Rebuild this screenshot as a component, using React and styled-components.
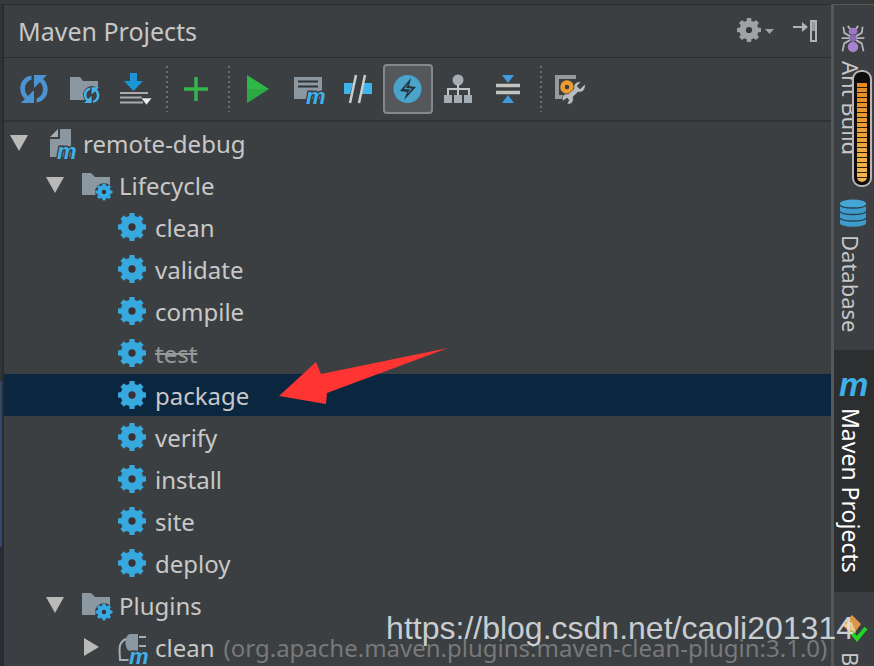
import React, { useState } from 'react';
import styled, { createGlobalStyle } from 'styled-components';

const GlobalStyle = createGlobalStyle`
  * {
    box-sizing: border-box;
  }

  body {
    margin: 0;
    background: #3c3f41;
    color: #c8c8c8;
    font-family: 'Noto Sans', 'Open Sans', sans-serif;
    font-size: 24px;
  }

  button {
    padding: 0;
    border: none;
    background: none;
    color: inherit;
    font: inherit;
    cursor: pointer;
  }

  svg {
    display: block;
    flex-shrink: 0;
    overflow: visible;
  }
`;

const Window = styled.div`
  position: relative;
  display: flex;
  height: 100vh;
  overflow: hidden;
  border-top: 4px solid #37393b;
`;

const EditorEdge = styled.div`
  flex: 0 0 4px;
  border-right: 2px solid #292b2e;
  background: linear-gradient(#313437 57%, #30486e 57%, #30486e 82%, #282c38 82%);
`;

const Panel = styled.main`
  display: flex;
  flex: 1;
  flex-direction: column;
  min-width: 0;
  border-top: 1px solid #292b2d;
`;

const Header = styled.header`
  display: flex;
  flex-shrink: 0;
  align-items: center;
  height: 53px;
  padding: 0 13px 0 14px;
  border-bottom: 1px solid #2b2d2f;
`;

const Title = styled.h1`
  flex: 1;
  margin: 0;
  font-size: 25px;
  font-weight: 400;
  line-height: 32px;
`;

const HeaderButton = styled.button`
  margin-left: 17px;
`;

const Toolbar = styled.div`
  display: flex;
  flex-shrink: 0;
  align-items: center;
  height: 64px;
  padding: 0 5px;
  border-bottom: 2px solid #303234;
`;

const ToolButton = styled.button`
  display: flex;
  align-items: center;
  justify-content: center;
  width: 50px;
  height: 50px;
  border: 2px solid ${(props) => (props.$active ? '#85888b' : 'transparent')};
  border-radius: 4px;
  background: ${(props) => (props.$active ? '#55585a' : 'transparent')};
`;

const Separator = styled.div`
  width: 2px;
  height: 46px;
  margin: 0 3px 0 7px;
  background: repeating-linear-gradient(#6b6e70 0 2px, transparent 2px 5px);
`;

const Tree = styled.ul`
  flex: 1;
  min-height: 0;
  margin: 0;
  padding: 0;
  list-style: none;
`;

const Row = styled.li`
  position: relative;
  display: flex;
  align-items: center;
  height: 42px;
  padding-left: ${(props) => 6 + props.$level * 36}px;
  background: ${(props) => (props.$selected ? '#0b263f' : 'transparent')};
  white-space: nowrap;
`;

const Toggle = styled.button`
  display: flex;
  flex: 0 0 18px;
  justify-content: center;
  margin-right: 18px;
`;

const ToggleSpace = styled.span`
  flex: 0 0 36px;
`;

const Label = styled.span`
  margin-left: 5px;
  color: ${(props) => (props.$skipped ? '#96989a' : '#c8c8c8')};
  text-decoration: ${(props) => (props.$skipped ? 'line-through' : 'none')};
  text-decoration-thickness: 2px;
`;

const Hint = styled.span`
  flex: 1;
  min-width: 0;
  margin-left: 9px;
  overflow: hidden;
  color: #77797b;
`;

const Pointer = styled.svg`
  position: absolute;
  top: -27px;
  left: 274px;
`;

const Sidebar = styled.nav`
  display: flex;
  flex: 0 0 43px;
  flex-direction: column;
  border-top: 1px solid #55585a;
  border-left: 3px solid #55585a;
`;

const SideTab = styled.button`
  display: flex;
  flex-direction: column;
  flex-shrink: 0;
  align-items: center;
  gap: 8px;
  width: 100%;
  padding: ${(props) => props.$top}px 2px ${(props) => props.$bottom}px 0;
  background: ${(props) => (props.$active ? '#2c2e30' : 'transparent')};
  color: ${(props) => (props.$active ? '#ffffff' : '#c8c8c8')};
`;

const SideLabel = styled.span`
  padding-right: 4px;
  font-size: ${(props) => (props.$active ? 23 : 22)}px;
  line-height: 32px;
  writing-mode: vertical-rl;
  white-space: nowrap;
`;

const Meter = styled.div`
  position: absolute;
  top: 66px;
  right: 2px;
  width: 20px;
  height: 117px;
  padding: 11px 3px 3px;
  border: 2px solid #b9b6b8;
  border-radius: 9px;
  background: #0e0c0c;
`;

const MeterFill = styled.div`
  height: 100%;
  border-radius: 0 0 5px 5px;
  background:
    repeating-linear-gradient(transparent 0 4px, #2a1a08 4px 5px),
    linear-gradient(#e58a1f, #f3b84c);
`;

const Watermark = styled.div`
  position: absolute;
  right: 20px;
  bottom: 20px;
  color: rgba(222, 226, 230, 0.88);
  font-family: 'Liberation Sans', Arial, sans-serif;
  font-size: 32px;
  line-height: 36px;
  pointer-events: none;
`;

const TEETH = [0, 45, 90, 135, 180, 225, 270, 315];

const GearShape = ({ cx, cy, r, color, hole = '#3a3034' }) => (
  <g fill={color}>
    <circle cx={cx} cy={cy} r={r * 0.8} />
    {TEETH.map((angle) => (
      <rect
        key={angle}
        x={cx - r * 0.19}
        y={cy - r}
        width={r * 0.38}
        height={r * 0.5}
        rx="0.8"
        transform={`rotate(${angle} ${cx} ${cy})`}
      />
    ))}
    <circle cx={cx} cy={cy} r={r * 0.26} fill={hole} />
  </g>
);

const MavenMark = ({ x, y, size, outline = '#3c3f41' }) => (
  <text
    x={x}
    y={y}
    fill="#3fb0e8"
    stroke={outline}
    strokeWidth="3"
    paintOrder="stroke"
    fontFamily="Liberation Sans, Arial, sans-serif"
    fontSize={size}
    fontStyle="italic"
    fontWeight="700"
  >
    m
  </text>
);

const Icon = ({ children, size = 32 }) => (
  <svg width={size} height={size} viewBox="0 0 32 32" fill="none" aria-hidden="true">
    {children}
  </svg>
);

const SyncShape = ({ color }) => (
  <>
    <path d="M13.5 2.5C2 4 -1.500 18 7 26L3 30H16V17L10 23C5 18 6 9 13.500 6.500z" fill={color} />
    <path d="M18.500 29.500C30 28 33.500 14 25 6L29 2H16V15L22 9C27 14 26 23 18.500 25.500z" fill={color} />
  </>
);

const RefreshIcon = () => (
  <Icon>
    <SyncShape color="#4b93d1" />
  </Icon>
);

const FolderSyncIcon = () => (
  <Icon>
    <path d="M2 4h10l3 4h15v19H2z" fill="#8b98a2" />
    <circle cx="24" cy="22" r="9" fill="#3c3f41" />
    <g transform="translate(14.500 13) scale(0.57)">
      <SyncShape color="#45b4ec" />
    </g>
  </Icon>
);

const DownloadIcon = () => (
  <Icon>
    <path d="M12 0h7v8h6l-9.500 10L6 8h6z" fill="#1a96d4" />
    <path d="M2 20h28M2 24.500h22M2 29.500h23" stroke="#a9abad" strokeWidth="2" />
    <path d="M23 25h11l-5.500 7z" fill="#ececec" stroke="#3c3f41" strokeWidth="0.600" />
  </Icon>
);

const AddIcon = () => (
  <Icon>
    <path d="M4 16h24M16 4v24" stroke="#35b64b" strokeWidth="3.500" />
  </Icon>
);

const RunIcon = () => (
  <Icon>
    <path d="M5 2l22 14L5 30z" fill="#2fb84a" />
    <path d="M5 16h22L5 30z" fill="#279a3c" opacity="0.500" />
  </Icon>
);

const GoalIcon = () => (
  <Icon>
    <path d="M2 4h28v22H2z" fill="#8b98a2" />
    <path d="M6 8.500h20M6 13.500h20" stroke="#303336" strokeWidth="2" />
    <MavenMark x="14" y="31" size="22" />
  </Icon>
);

const OfflineIcon = () => (
  <Icon>
    <path d="M2 10h9l-3 11H2zM22 10h8v11H19z" fill="#3fb4ec" />
    <path d="M14 2L8 30M23 2l-6 28" stroke="#c9cbcc" strokeWidth="2.500" />
  </Icon>
);

const SkipTestsIcon = () => (
  <Icon>
    <circle cx="15.500" cy="16" r="14" fill="#4aa3cb" />
    <path d="M19 5L8 18l7 1-3 8 12-13-7-1z" fill="#26333b" />
    <path d="M16.500 10L12 16l6 .500-3 5 5-6-6-.500z" fill="#4aa3cb" />
  </Icon>
);

const DiagramIcon = () => (
  <Icon>
    <circle cx="16" cy="7" r="5.500" fill="#a3adb3" />
    <path d="M16 11v11M6 23v-7h21v7" stroke="#c0c4c7" strokeWidth="2" />
    <path d="M2 22h8v8H2zM12 22h8v8h-8zM22 22h8v8h-8z" fill="#a3adb3" />
  </Icon>
);

const CollapseIcon = () => (
  <Icon>
    <path d="M10 2h12l-6 8zM10 30h12l-6-8z" fill="#3e9be0" />
    <path d="M4 12.500h24M4 19.500h24" stroke="#c1c4bf" strokeWidth="3.500" />
  </Icon>
);

const SettingsIcon = () => (
  <Icon>
    <path d="M22 4H3v20h6" stroke="#98999b" strokeWidth="4" />
    <circle cx="13" cy="14" r="4.500" stroke="#eb9b2f" strokeWidth="4.500" />
    <path
      d="M31 11l-5 5-3-3 4-4c-5-1-8 3-7 7l-6 5c-4-1-7 3-5 7l4-3 2 2-2 4c5 1 7-3 6-7l5-5c5 1 8-3 7-8z"
      fill="#b9bbbd"
      stroke="#3c3f41"
      strokeWidth="0.600"
    />
  </Icon>
);

const ProjectIcon = () => (
  <Icon>
    <path d="M14 2h11v28H4V12h10z" fill="#8b98a2" />
    <path d="M4 10l8-8v8z" fill="#a3afb7" />
    <MavenMark x="11" y="32" size="22" />
  </Icon>
);

const FolderGearIcon = () => (
  <Icon>
    <path d="M0 4h9l4 4h15v18H0z" fill="#8b98a2" />
    <circle cx="22" cy="23" r="9" fill="#3c3f41" />
    <GearShape cx={22} cy={23} r={8.5} color="#36aae4" />
  </Icon>
);

const GoalGearIcon = () => (
  <Icon>
    <GearShape cx={14} cy={16} r={14} color="#36a9df" />
  </Icon>
);

const PluginIcon = () => (
  <Icon>
    <path d="M12 3h8v17h-8c-6-1-6-16 0-17z" fill="#8b98a2" />
    <path d="M21 6h7M21 15h7M8 8c-9 4-6 12-6 21h9" stroke="#a3afb7" strokeWidth="2" />
    <MavenMark x="11" y="33" size="22" />
  </Icon>
);

const OptionsIcon = () => (
  <svg width="38" height="26" viewBox="0 0 38 26" aria-hidden="true">
    <GearShape cx={12} cy={12} r={12} color="#a0a2a4" hole="#35373a" />
    <path d="M28 11h9l-4.500 5z" fill="#a0a2a4" />
  </svg>
);

const HideIcon = () => (
  <svg width="26" height="26" viewBox="0 0 26 26" fill="none" aria-hidden="true">
    <path d="M1 9h11" stroke="#b0b2b4" strokeWidth="2" />
    <path d="M10 4l6 5-6 5z" fill="#b0b2b4" />
    <path d="M19 3h5v20h-5z" stroke="#b0b2b4" strokeWidth="2" />
    <path d="M20 4h3v9h-3z" fill="#96989a" />
  </svg>
);

const AntIcon = () => (
  <Icon size={28}>
    <path
      d="M13 13L6 9l-1-7M19 13l7-4 1-7M13 15H3M19 15h10M13 17l-7 4-2 9M19 17l7 4 2 9M13 5l-3-4M19 5l3-4"
      stroke="#b6b3ba"
      strokeWidth="2"
    />
    <ellipse cx="16" cy="7" rx="5" ry="4" fill="#9a78c4" />
    <ellipse cx="16" cy="15" rx="4" ry="4" fill="#8a6bb2" />
    <ellipse cx="16" cy="25" rx="6" ry="6" fill="#a482cd" />
  </Icon>
);

const DatabaseIcon = () => (
  <svg width="28" height="28" viewBox="0 0 28 28" aria-hidden="true">
    <path d="M1 4v20c0 5 26 5 26 0V4z" fill="#3d9ccb" />
    <ellipse cx="14" cy="4.500" rx="13" ry="4" fill="#45a6d5" />
    <path
      d="M1 6c2 4 24 4 26 0M1 12.500c2 4 24 4 26 0M1 19c2 4 24 4 26 0"
      fill="none"
      stroke="#28414f"
      strokeWidth="1.500"
    />
  </svg>
);

const MavenIcon = () => (
  <svg width="32" height="28" viewBox="0 0 32 28" aria-hidden="true">
    <MavenMark x="2" y="24" size="33" outline="#2c2e30" />
  </svg>
);

const BeanIcon = () => (
  <Icon>
    <path d="M5 13L15 3l9 9-8 11z" fill="#d9954a" />
    <path d="M5 13l10-3 4 11z" fill="#f0c890" />
    <path d="M14 20l6 7 9-11" fill="none" stroke="#22d322" strokeWidth="4" />
  </Icon>
);

const goals = ['clean', 'validate', 'compile', 'test', 'package', 'verify', 'install', 'site', 'deploy'];

const toolGroups = [
  [
    { name: 'Reimport', icon: RefreshIcon },
    { name: 'Generate Sources', icon: FolderSyncIcon },
    { name: 'Download', icon: DownloadIcon },
  ],
  [{ name: 'Add Project', icon: AddIcon }],
  [
    { name: 'Run', icon: RunIcon },
    { name: 'Execute Goal', icon: GoalIcon },
    { name: 'Toggle Offline', icon: OfflineIcon },
    { name: 'Skip Tests', icon: SkipTestsIcon },
    { name: 'Show Dependencies', icon: DiagramIcon },
    { name: 'Collapse All', icon: CollapseIcon },
  ],
  [{ name: 'Maven Settings', icon: SettingsIcon }],
];

const ToggleArrow = ({ open, onClick, label }) => (
  <Toggle type="button" aria-label={`Toggle ${label}`} aria-expanded={open} onClick={onClick}>
    <svg width="18" height="18" viewBox="0 0 18 18" aria-hidden="true">
      <path d={open ? 'M0 1h18L9 17z' : 'M2 0v18l15-9z'} fill="#b9bab8" />
    </svg>
  </Toggle>
);

const App = () => {
  const [selected, setSelected] = useState('package');
  const [skipTests, setSkipTests] = useState(true);
  const [open, setOpen] = useState({ project: true, lifecycle: true, plugins: true, clean: false });

  const toggle = (key) => setOpen((prev) => ({ ...prev, [key]: !prev[key] }));

  return (
    <>
      <GlobalStyle />
      <Window>
        <EditorEdge />
        <Panel>
          <Header>
            <Title>Maven Projects</Title>
            <HeaderButton type="button" aria-label="Options">
              <OptionsIcon />
            </HeaderButton>
            <HeaderButton type="button" aria-label="Hide">
              <HideIcon />
            </HeaderButton>
          </Header>
          <Toolbar role="toolbar">
            {toolGroups.map((group, index) => (
              <React.Fragment key={group[0].name}>
                {index > 0 && <Separator />}
                {group.map(({ name, icon: ToolIcon }) => (
                  <ToolButton
                    key={name}
                    type="button"
                    aria-label={name}
                    $active={name === 'Skip Tests' && skipTests}
                    onClick={name === 'Skip Tests' ? () => setSkipTests(!skipTests) : undefined}
                  >
                    <ToolIcon />
                  </ToolButton>
                ))}
              </React.Fragment>
            ))}
          </Toolbar>
          <Tree>
            <Row $level={0}>
              <ToggleArrow open={open.project} label="remote-debug" onClick={() => toggle('project')} />
              <ProjectIcon />
              <Label>remote-debug</Label>
            </Row>
            {open.project && (
              <>
                <Row $level={1}>
                  <ToggleArrow open={open.lifecycle} label="Lifecycle" onClick={() => toggle('lifecycle')} />
                  <FolderGearIcon />
                  <Label>Lifecycle</Label>
                </Row>
                {open.lifecycle &&
                  goals.map((goal) => (
                    <Row
                      key={goal}
                      $level={2}
                      $selected={goal === selected}
                      onClick={() => setSelected(goal)}
                    >
                      <ToggleSpace />
                      <GoalGearIcon />
                      <Label $skipped={skipTests && goal === 'test'}>{goal}</Label>
                      {goal === 'package' && (
                        <Pointer width="172" height="60" viewBox="0 0 172 60" aria-hidden="true">
                          <path d="M1 49L38 15l5 12L170 1 49 46l-1 11z" fill="#ff3534" />
                        </Pointer>
                      )}
                    </Row>
                  ))}
                <Row $level={1}>
                  <ToggleArrow open={open.plugins} label="Plugins" onClick={() => toggle('plugins')} />
                  <FolderGearIcon />
                  <Label>Plugins</Label>
                </Row>
                {open.plugins && (
                  <Row $level={2}>
                    <ToggleArrow open={open.clean} label="clean plugin" onClick={() => toggle('clean')} />
                    <PluginIcon />
                    <Label>clean</Label>
                    <Hint>(org.apache.maven.plugins:maven-clean-plugin:3.1.0)</Hint>
                  </Row>
                )}
              </>
            )}
          </Tree>
        </Panel>
        <Sidebar>
          <SideTab type="button" $top={20} $bottom={40}>
            <AntIcon />
            <SideLabel>Ant Build</SideLabel>
          </SideTab>
          <SideTab type="button" $top={4} $bottom={17}>
            <DatabaseIcon />
            <SideLabel>Database</SideLabel>
          </SideTab>
          <SideTab type="button" $active $top={22} $bottom={20}>
            <MavenIcon />
            <SideLabel $active>Maven Projects</SideLabel>
          </SideTab>
          <SideTab type="button" $top={20} $bottom={20}>
            <BeanIcon />
            <SideLabel>Bean Validation</SideLabel>
          </SideTab>
        </Sidebar>
        <Meter>
          <MeterFill />
        </Meter>
        <Watermark>https://blog.csdn.net/caoli201314</Watermark>
      </Window>
    </>
  );
};

export default App;
